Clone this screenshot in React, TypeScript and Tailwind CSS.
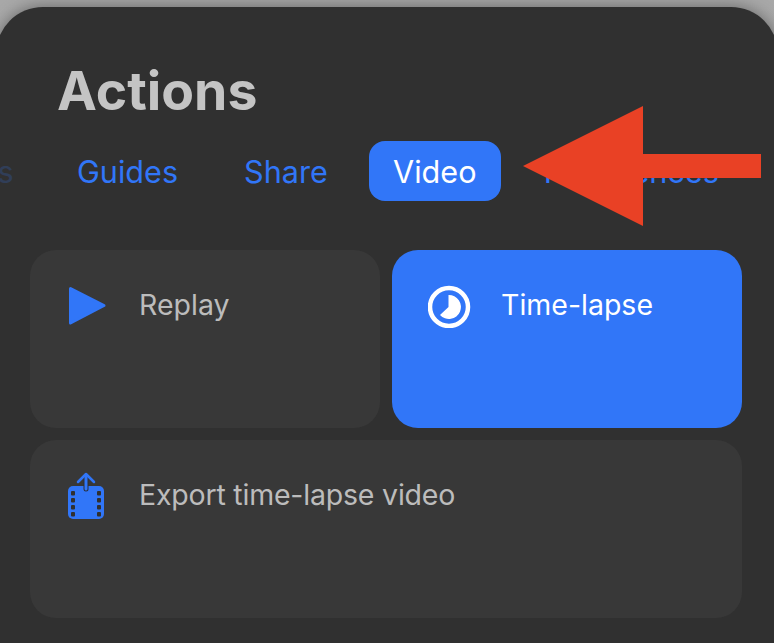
import React from 'react'

const PlayIcon = () => (
  <svg width="44" height="42" viewBox="0 0 44 42" className="shrink-0">
    <path d="M4.5 3.5 L38 20.5 L4.5 38 Z" fill="#3176f8" stroke="#3176f8" strokeWidth="3" strokeLinejoin="round" />
  </svg>
)

const TimeLapseIcon = () => (
  <svg width="44" height="44" viewBox="0 0 44 44" className="shrink-0">
    <circle cx="21" cy="23" r="19" fill="none" stroke="#fff" strokeWidth="4.5" />
    <path d="M20.5 11 A12 12 0 1 1 12 31 L20.5 23 Z" fill="#fff" />
  </svg>
)

const ExportIcon = () => (
  <svg width="40" height="48" viewBox="-1 0 40 48" className="shrink-0">
    <rect x="1" y="14" width="36" height="33" rx="5" fill="#3176f8" />
    <path d="M19 5 V17" stroke="#2a2f3a" strokeWidth="5" strokeLinecap="round" />
    <path d="M19 3 V17" stroke="#3176f8" strokeWidth="3" strokeLinecap="round" />
    <path d="M11 10 L19 2 L27 10" fill="none" stroke="#3176f8" strokeWidth="2.5" strokeLinecap="round" strokeLinejoin="round" />
    {[19, 26, 33, 40].map((y) => (
      <React.Fragment key={y}>
        <rect x="4" y={y} width="4" height="4.5" rx="1" fill="#303030" />
        <rect x="30" y={y} width="4" height="4.5" rx="1" fill="#303030" />
      </React.Fragment>
    ))}
  </svg>
)

const ActionCard: React.FC<{ label: string; icon: React.ReactNode; active?: boolean; wide?: boolean }> = ({ label, icon, active, wide }) => (
  <div className={`h-[178px] rounded-[26px] ${wide ? 'col-span-2' : ''} ${active ? 'bg-[#3176f8] text-white' : 'bg-[#383838] text-[#bcbcbc]'}`}>
    <div className="flex items-start h-[64px] pt-[34px] pl-[36px]">
      <div className="w-[73px] h-[44px] flex items-center">{icon}</div>
      <span className={`text-[28.5px] leading-[44px] -mt-[1px] ${wide ? 'tracking-[-0.2px]' : ''}`}>{label}</span>
    </div>
  </div>
)

export default function App() {
  return (
    <div className="w-[774px] h-[643px] overflow-hidden relative pt-[7px] bg-gradient-to-b from-[#a8a8a8] to-[#bcbcbc] font-['Inter',sans-serif]">
      <div className="h-[700px] -mx-[4px] px-[4px] bg-[#303030] rounded-t-[47px] shadow-[0_0_16px_rgba(0,0,0,0.4)] overflow-hidden">
        <h1 className="pl-[57px] pt-[49px] text-[53.5px] leading-[70px] font-bold text-[#c4c4c4]">Actions</h1>

        {/* tab strip runs past both edges */}
        <div className="flex items-center h-[60px] mt-[15px] -ml-[64px] text-[30.6px] text-[#3176f8]">
          <span className="w-[70px] pt-[2px] text-right opacity-20">Tools</span>
          <span className="ml-[71px] pt-[2px]">Guides</span>
          <span className="ml-[66px] pt-[2px]">Share</span>
          <span className="ml-[41px] h-[60px] w-[132px] pt-[2px] flex items-center justify-center rounded-2xl bg-[#3176f8] text-white">Video</span>
          <span className="ml-[43px] pt-[2px]">Preferences</span>
        </div>

        <div className="grid grid-cols-2 gap-3 mt-[49px] ml-[30px] w-[712px]">
          <ActionCard label="Replay" icon={<PlayIcon />} />
          <ActionCard label="Time-lapse" icon={<TimeLapseIcon />} active />
          <ActionCard label="Export time-lapse video" icon={<ExportIcon />} wide />
        </div>
      </div>

      {/* annotation arrow on top of the screenshot */}
      <svg width="240" height="122" viewBox="0 0 240 122" className="absolute left-[522px] top-[105px]">
        <path d="M1 61 L121 1 V49 H239 V73 H121 V121 Z" fill="#e94125" />
      </svg>
    </div>
  )
}
